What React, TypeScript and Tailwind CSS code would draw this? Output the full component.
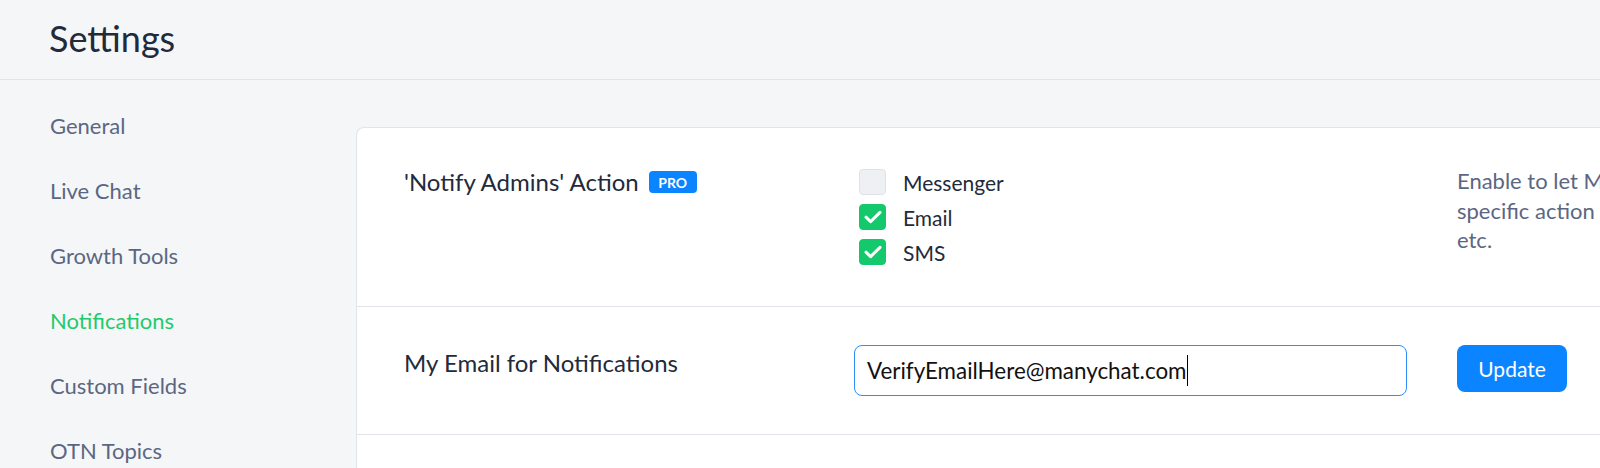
import { useState } from 'react';

const navItems = ['General', 'Live Chat', 'Growth Tools', 'Notifications', 'Custom Fields', 'OTN Topics'];

const CheckBox = ({ checked }: { checked: boolean }) => (
  <span
    className={`flex h-[26px] w-[27px] items-center justify-center rounded-[4px] border ${
      checked ? 'border-[#14c96b] bg-[#14c96b]' : 'border-[#dfe3e8] bg-[#eef0f3]'
    }`}
  >
    {checked && (
      <svg width="18" height="14" viewBox="0 0 18 14" fill="none">
        <path d="M2 7.2 L6.6 11.6 L16 2.4" stroke="white" strokeWidth="3" strokeLinecap="round" strokeLinejoin="round" />
      </svg>
    )}
  </span>
);

const App = () => {
  const [channels, setChannels] = useState({ Messenger: false, Email: true, SMS: true });

  return (
    <div className="h-[468px] w-[1600px] overflow-hidden bg-[#f5f6f8] font-['Lato',sans-serif]">
      {/* Header */}
      <header className="flex h-[80px] items-center border-b border-[#e1e4e9] pl-[49px]">
        <h1 className="pb-[4px] text-[36px] leading-none text-[#222a3b]">Settings</h1>
      </header>

      <div className="flex">
        {/* Sidebar */}
        <nav className="w-[356px] shrink-0 pt-[13px]">
          <ul>
            {navItems.map((item) => (
              <li key={item} className="flex h-[65px] items-center pl-[50px]">
                <a
                  href="#"
                  className={`text-[22px] leading-none ${item === 'Notifications' ? 'text-[#1ecb6a]' : 'text-[#5b6782]'}`}
                >
                  {item}
                </a>
              </li>
            ))}
          </ul>
        </nav>

        {/* Content card */}
        <div className="mt-[47px] w-[1400px] shrink-0 rounded-tl-[8px] border border-r-0 border-[#e1e4e9] bg-white">
          <div className="flex h-[179px] border-b border-[#e1e4e9] pt-[38px]">
            <div className="flex w-[497px] shrink-0 items-start pl-[47px]">
              <span className="text-[24px] leading-[32px] text-[#222a3b]">'Notify Admins' Action</span>
              <span className="ml-[10px] mt-[5px] flex h-[22px] w-[48px] items-center justify-center rounded-[4px] bg-[#0a84ff] text-[14px] font-bold text-white">
                PRO
              </span>
            </div>
            <div className="flex w-[603px] shrink-0 flex-col gap-[9px] pl-[5px] pt-[3px]">
              {(Object.keys(channels) as (keyof typeof channels)[]).map((name) => (
                <label
                  key={name}
                  className="flex cursor-pointer items-center gap-[17px]"
                  onClick={() => setChannels({ ...channels, [name]: !channels[name] })}
                >
                  <CheckBox checked={channels[name]} />
                  <span className="text-[21px] leading-none text-[#222a3b]">{name}</span>
                </label>
              ))}
            </div>
            <p className="w-[300px] shrink-0 whitespace-nowrap text-[22px] leading-[29.5px] text-[#5b6782]">
              Enable to let ManyChat notify you about
              <br />
              specific action of your subscribers: orders,
              <br />
              etc.
            </p>
          </div>

          <div className="flex h-[128px] border-b border-[#e1e4e9] pt-[38px]">
            <div className="flex w-[497px] shrink-0 items-start pl-[47px] pt-[2px]">
              <span className="text-[24px] leading-[32px] text-[#222a3b]">My Email for Notifications</span>
            </div>
            <div className="w-[603px] shrink-0">
              <div className="flex h-[51px] w-[553px] items-center rounded-[8px] border-[1.5px] border-[#2f8ef8] pl-[12px]">
                <span className="text-[22.4px] text-[#111]">VerifyEmailHere@manychat.com</span>
                <span className="inline-block h-[31px] w-px bg-black" />
              </div>
            </div>
            <button className="h-[47px] w-[110px] shrink-0 rounded-[8px] bg-[#0a84ff] text-[21px] text-white">Update</button>
          </div>
          <div className="h-[60px]" />
        </div>
      </div>
    </div>
  );
};

export default App;
